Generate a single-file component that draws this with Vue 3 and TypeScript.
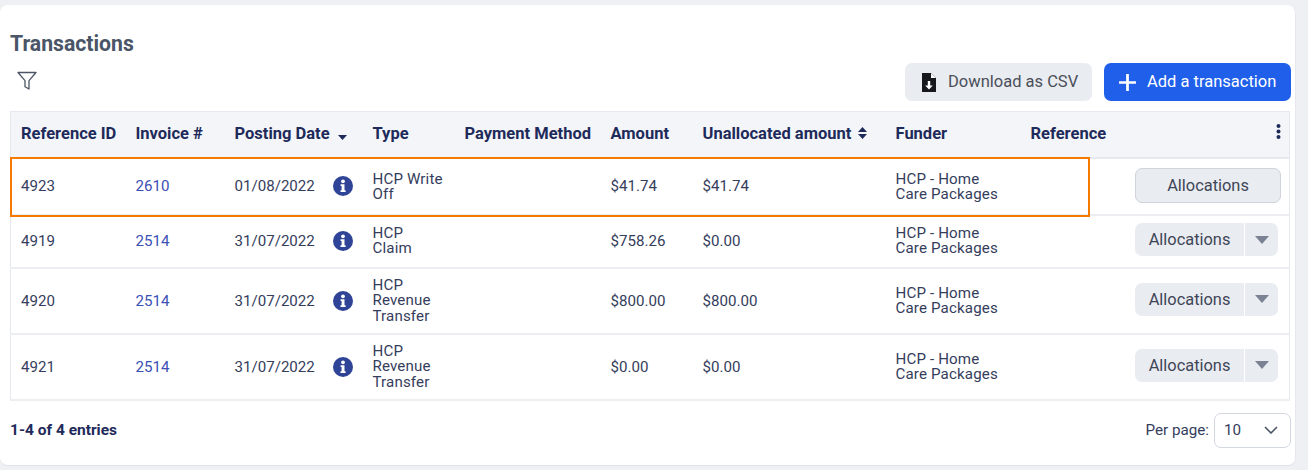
<script setup lang="ts">
interface Row {
  id: string
  invoice: string
  date: string
  type: string[]
  amount: string
  unallocated: string
  split: boolean
  rowClass: string
}

const rows: Row[] = [
  { id: '4923', invoice: '2610', date: '01/08/2022', type: ['HCP Write', 'Off'], amount: '$41.74', unallocated: '$41.74', split: false, rowClass: 'r1' },
  { id: '4919', invoice: '2514', date: '31/07/2022', type: ['HCP', 'Claim'], amount: '$758.26', unallocated: '$0.00', split: true, rowClass: 'r2' },
  { id: '4920', invoice: '2514', date: '31/07/2022', type: ['HCP', 'Revenue', 'Transfer'], amount: '$800.00', unallocated: '$800.00', split: true, rowClass: 'r3' },
  { id: '4921', invoice: '2514', date: '31/07/2022', type: ['HCP', 'Revenue', 'Transfer'], amount: '$0.00', unallocated: '$0.00', split: true, rowClass: 'r3' },
]
</script>

<template>
  <div class="page">
    <section class="card">
      <h2 class="title">Transactions</h2>
      <div class="toolbar">
        <svg class="filter" width="22" height="20" viewBox="0 0 22 20" fill="none" stroke="#4b5563" stroke-width="1.3" stroke-linejoin="round">
          <path d="M2 1.5h18l-7 8.2v8.3l-4-2.2V9.700z" />
        </svg>
        <div class="actions">
          <button class="btn grey">
            <svg width="16" height="19" viewBox="0 0 16 19"><path fill="#16181d" d="M1 0h9l5 5v14H1z" /><path fill="#fff" d="M10 0v5h5z" /><path fill="#fff" d="M6.800 8h2.400v4.500h2.600L8 16.500l-3.800-4h2.600z" /></svg>
            <span>Download as CSV</span>
          </button>
          <button class="btn blue">
            <svg width="19" height="19" viewBox="0 0 18 18"><path fill="#fff" d="M7.700 1h2.600v6.700H17v2.600h-6.700V17H7.700v-6.700H1V7.700h6.700z" /></svg>
            <span>Add a transaction</span>
          </button>
        </div>
      </div>

      <div class="table-wrap">
        <table>
          <colgroup>
            <col class="c1" /><col class="c2" /><col class="c3" /><col class="c4" /><col class="c5" />
            <col class="c6" /><col class="c7" /><col class="c8" /><col class="c9" /><col />
          </colgroup>
          <thead>
            <tr>
              <th>Reference ID</th>
              <th>Invoice #</th>
              <th>Posting Date <svg class="sort" width="9" height="5" viewBox="0 0 9 5"><path fill="#1e2a5a" d="M0 0h9L4.500 5z" /></svg></th>
              <th>Type</th>
              <th>Payment Method</th>
              <th>Amount</th>
              <th>Unallocated amount <svg class="sort both" width="9" height="12" viewBox="0 0 9 12"><path fill="#1e2a5a" d="M4.500 0L9 5H0zM0 7h9l-4.500 5z" /></svg></th>
              <th>Funder</th>
              <th>Reference</th>
              <th class="kebab-cell">
                <svg width="5" height="15" viewBox="0 0 5 15"><g fill="#1e2a5a"><circle cx="2.500" cy="2" r="2" /><circle cx="2.500" cy="7.500" r="2" /><circle cx="2.500" cy="13" r="2" /></g></svg>
              </th>
            </tr>
          </thead>
          <tbody>
            <tr v-for="row in rows" :key="row.id" :class="row.rowClass">
              <td>{{ row.id }}</td>
              <td><a class="link">{{ row.invoice }}</a></td>
              <td>
                <div class="date">
                  <span>{{ row.date }}</span>
                  <svg width="20" height="20" viewBox="0 0 20 20">
                    <circle cx="10" cy="10" r="10" fill="#2f4496" />
                    <circle cx="10" cy="5.300" r="1.900" fill="#fff" />
                    <path fill="#fff" d="M7.600 8.200h3.900v6h1.100v1.700H7.500v-1.700h1.100V9.900h-1z" />
                  </svg>
                </div>
              </td>
              <td class="multi"><div v-for="line in row.type" :key="line">{{ line }}</div></td>
              <td></td>
              <td>{{ row.amount }}</td>
              <td>{{ row.unallocated }}</td>
              <td class="multi"><div>HCP - Home</div><div>Care Packages</div></td>
              <td></td>
              <td class="action-cell">
                <div v-if="row.split" class="split">
                  <span class="split-main">Allocations</span>
                  <span class="split-caret"><svg width="14" height="8" viewBox="0 0 14 8"><path fill="#7b8294" d="M0 0h14L7 8z" /></svg></span>
                </div>
                <div v-else class="solo">Allocations</div>
              </td>
            </tr>
          </tbody>
        </table>
        <div class="highlight"></div>
      </div>

      <footer class="foot">
        <strong>1-4 of 4 entries</strong>
        <div class="per-page">
          <span>Per page:</span>
          <div class="select">
            <span>10</span>
            <svg width="14" height="8" viewBox="0 0 14 8" fill="none" stroke="#4b5563" stroke-width="1.600"><path d="M1 1l6 6 6-6" /></svg>
          </div>
        </div>
      </footer>
    </section>
  </div>
</template>

<style>
html, body { margin: 0; background: #eef0f4; }
</style>

<style scoped>
.page {
  width: 1308px;
  height: 470px;
  box-sizing: border-box;
  padding: 5px 12px 4px 0;
  background: #eef0f4;
  font-family: Roboto, "Liberation Sans", sans-serif;
  color: #353d5c;
  overflow: hidden;
}
.card {
  height: 461px;
  box-sizing: border-box;
  padding: 0 4px 0 10px;
  background: #fff;
  border-radius: 8px;
  border-bottom: 1px solid #dfe2e8;
  border-right: 1px solid #e6e8ed;
}
.title {
  margin: 0;
  padding-top: 27px;
  height: 44px;
  box-sizing: border-box;
  font-size: 21.200px;
  line-height: 23px;
  font-weight: 700;
  color: #4a5568;
}
.toolbar {
  display: flex;
  justify-content: space-between;
  align-items: flex-start;
  height: 62px;
}
.filter { margin: 22px 0 0 6px; }
.actions {
  display: flex;
  gap: 12px;
  margin-top: 14px;
}
.btn {
  display: flex;
  align-items: center;
  height: 38px;
  border: 0;
  border-radius: 7px;
  padding: 0;
  font: 400 16.500px/18px Roboto, "Liberation Sans", sans-serif;
  white-space: nowrap;
}
.grey {
  width: 187px;
  background: #e9ecf0;
  color: #4a4f5a;
  padding-left: 16px;
  gap: 11px;
}
.blue {
  width: 187px;
  background: #1f5fea;
  color: #fff;
  padding-left: 14px;
  gap: 10px;
}
.table-wrap { position: relative; }
table {
  width: 1280px;
  border-collapse: collapse;
  table-layout: fixed;
  font-size: 15.100px;
  border: 1px solid #e5e8ee;
}
.c1 { width: 115px; }
.c2 { width: 99px; }
.c3 { width: 138px; }
.c4 { width: 92px; }
.c5 { width: 146px; }
.c6 { width: 92px; }
.c7 { width: 193px; }
.c8 { width: 135px; }
.c9 { width: 100px; }
th {
  height: 46px;
  padding: 0 0 2px 10px;
  box-sizing: border-box;
  text-align: left;
  font-size: 16.500px;
  font-weight: 700;
  color: #1e2a5a;
  background: #f3f5f9;
  border-bottom: 2px solid #e5e8ee;
  white-space: nowrap;
}
td {
  padding: 0 0 0 10px;
  box-sizing: border-box;
  border-bottom: 2px solid #eceef2;
  vertical-align: middle;
}
.r1 { height: 57px; }
.r2 { height: 53px; }
.r3 { height: 66px; }
.r1 td.multi { padding-top: 2px; }
.r3 td { padding-top: 1px; }
.multi { line-height: 15.500px; padding-right: 6px; letter-spacing: 0.150px; }
.link { color: #3a50b4; }
.date {
  display: flex;
  align-items: center;
  justify-content: space-between;
  padding-right: 10px;
}
.sort { margin-left: 4px; vertical-align: -1px; }
.sort.both { vertical-align: 0; margin-left: 3px; }
.kebab-cell { text-align: right; padding-right: 8px; }
td.action-cell { padding: 0 11px 3px 0; text-align: right; }
.r1 td.action-cell { padding-bottom: 2px; }
.split {
  display: inline-flex;
  gap: 1px;
  height: 33px;
  vertical-align: middle;
}
.split-main {
  width: 109px;
  display: flex;
  align-items: center;
  justify-content: center;
  background: #e9ecf0;
  border-radius: 7px 0 0 7px;
  font-size: 16.400px;
  color: #3f4658;
}
.split-caret {
  width: 33px;
  display: flex;
  align-items: center;
  justify-content: center;
  background: #e9ecf0;
  border-radius: 0 7px 7px 0;
}
.solo {
  display: inline-flex;
  align-items: center;
  justify-content: center;
  width: 146px;
  height: 35px;
  box-sizing: border-box;
  margin-right: -3px;
  background: #e9ecf0;
  border: 1px solid #cfd4dd;
  border-radius: 7px;
  font-size: 16.400px;
  color: #3f4658;
  vertical-align: middle;
}
.highlight {
  position: absolute;
  left: 0;
  top: 46px;
  width: 1080px;
  height: 60px;
  box-sizing: border-box;
  border: 2.500px solid #f57a00;
  pointer-events: none;
}
.foot {
  display: flex;
  justify-content: space-between;
  align-items: center;
  padding-top: 12px;
}
.foot strong {
  font-size: 15.500px;
  font-weight: 700;
  color: #1e2a5a;
}
.per-page {
  display: flex;
  align-items: center;
  gap: 5px;
  font-size: 15.200px;
}
.select {
  width: 77px;
  height: 35px;
  box-sizing: border-box;
  display: flex;
  align-items: center;
  justify-content: space-between;
  padding: 0 12px 0 9px;
  border: 1px solid #d3d7df;
  border-radius: 7px;
}
</style>
